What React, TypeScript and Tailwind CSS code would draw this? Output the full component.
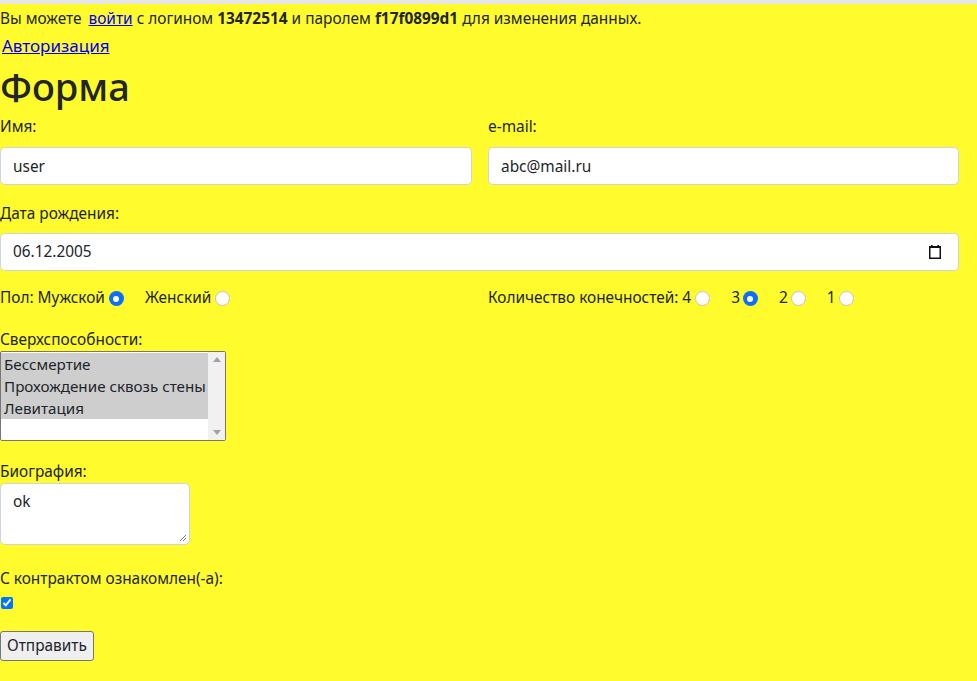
import React from "react";

const Radio = ({ checked }: { checked?: boolean }) =>
  checked ? (
    <span className="inline-flex w-[15px] h-[15px] rounded-full bg-[#0d6efd] items-center justify-center align-middle">
      <span className="w-[6px] h-[6px] rounded-full bg-white" />
    </span>
  ) : (
    <span className="inline-block w-[15px] h-[15px] rounded-full bg-white border border-[#c4c4c4] align-middle" />
  );

const CalendarIcon = () => (
  <svg width="14" height="14" viewBox="0 0 14 14">
    <rect x="1" y="1" width="12" height="2" fill="#111" />
    <rect x="3" y="0" width="1.6" height="2" fill="#111" />
    <rect x="9.4" y="0" width="1.6" height="2" fill="#111" />
    <rect x="1.75" y="2" width="10.5" height="11.25" fill="none" stroke="#111" strokeWidth="1.5" />
  </svg>
);

const App = () => {
  return (
    <main
      className="min-h-[681px] bg-[#fffb2c] text-[#212529] text-[15.4px] leading-[22px]"
      style={{ fontFamily: '"Noto Sans", "Open Sans", sans-serif' }}
    >
      <div className="h-[4px] bg-[#e6e6e6]" />
      <div className="pt-[4px]">
        Вы можете{" "}
        <a href="#" className="ml-[3px] text-[#0000ee] underline">
          войти
        </a>{" "}
        с логином <b>13472514</b> и паролем <b>f17f0899d1</b> для изменения данных.
      </div>
      <div className="mt-[4px] pl-[2px] text-[17px] leading-[24px]">
        <a href="#" className="text-[#0000ee] underline">
          Авторизация
        </a>
      </div>
      <h1 className="mt-[5px] text-[38px] leading-[46px] font-medium">Форма</h1>

      <form className="w-[960px]">
        <div className="grid grid-cols-[472px_471px] gap-x-[16px] mt-[7px]">
          <div>
            <label>Имя:</label>
            <input
              readOnly
              value="user"
              className="mt-[9px] block w-full h-[38px] px-[12px] bg-white border border-[#ced4da] rounded-[5px]"
            />
          </div>
          <div>
            <label>e-mail:</label>
            <input
              readOnly
              value="abc@mail.ru"
              className="mt-[9px] block w-full h-[38px] px-[12px] bg-white border border-[#ced4da] rounded-[5px]"
            />
          </div>
        </div>

        <div className="mt-[18px]">Дата рождения:</div>
        <div className="mt-[8px] w-[959px] h-[38px] px-[12px] flex items-center justify-between bg-white border border-[#ced4da] rounded-[5px]">
          <span>06.12.2005</span>
          <span className="mr-[4px]">
            <CalendarIcon />
          </span>
        </div>

        <div className="grid grid-cols-[472px_471px] gap-x-[16px] mt-[16px]">
          <div className="flex items-center">
            <span>Пол: Мужской</span>
            <span className="ml-[4px]">
              <Radio checked />
            </span>
            <span className="ml-[21px]">Женский</span>
            <span className="ml-[4px]">
              <Radio />
            </span>
          </div>
          <div className="flex items-center">
            <span>Количество конечностей: 4</span>
            <span className="ml-[4px]">
              <Radio />
            </span>
            <span className="ml-[21px]">3</span>
            <span className="ml-[3px]">
              <Radio checked />
            </span>
            <span className="ml-[21px]">2</span>
            <span className="ml-[3px]">
              <Radio />
            </span>
            <span className="ml-[21px]">1</span>
            <span className="ml-[3px]">
              <Radio />
            </span>
          </div>
        </div>

        <div className="mt-[20px]">Сверхспособности:</div>
        <div className="w-[226px] h-[90px] flex bg-white border border-[#767676] rounded-[2px] text-[15.2px]">
          <div className="flex-1 pt-[1px]">
            <div className="h-[22px] pl-[3px] bg-[#cecece]">Бессмертие</div>
            <div className="h-[22px] pl-[3px] bg-[#cecece] whitespace-nowrap">Прохождение сквозь стены</div>
            <div className="h-[22px] pl-[3px] bg-[#cecece]">Левитация</div>
          </div>
          <div className="w-[17px] bg-[#f1f1f1] flex flex-col justify-between items-center py-[5px]">
            <svg width="8" height="5" viewBox="0 0 8 5">
              <path d="M0 5 L4 0 L8 5 Z" fill="#a3a3a3" />
            </svg>
            <svg width="8" height="5" viewBox="0 0 8 5">
              <path d="M0 0 L4 5 L8 0 Z" fill="#a3a3a3" />
            </svg>
          </div>
        </div>

        <div className="mt-[20px]">Биография:</div>
        <div className="relative w-[190px] h-[62px] bg-white border border-[#ced4da] rounded-[5px] px-[12px] pt-[7px]">
          ok
          <svg className="absolute right-[2px] bottom-[2px]" width="8" height="8" viewBox="0 0 8 8">
            <path d="M7 1 L1 7 M7 4 L4 7" stroke="#777" strokeWidth="1" />
          </svg>
        </div>

        <div className="mt-[23px]">С контрактом ознакомлен(-а):</div>
        <input type="checkbox" readOnly checked className="block mt-[7px] ml-[1px] w-[12px] h-[12px] accent-[#0075ff]" />

        <button
          type="button"
          className="mt-[22px] h-[30px] px-[6px] bg-[#efefef] border border-[#767676] rounded-[3px]"
        >
          Отправить
        </button>
      </form>
    </main>
  );
};

export default App;
